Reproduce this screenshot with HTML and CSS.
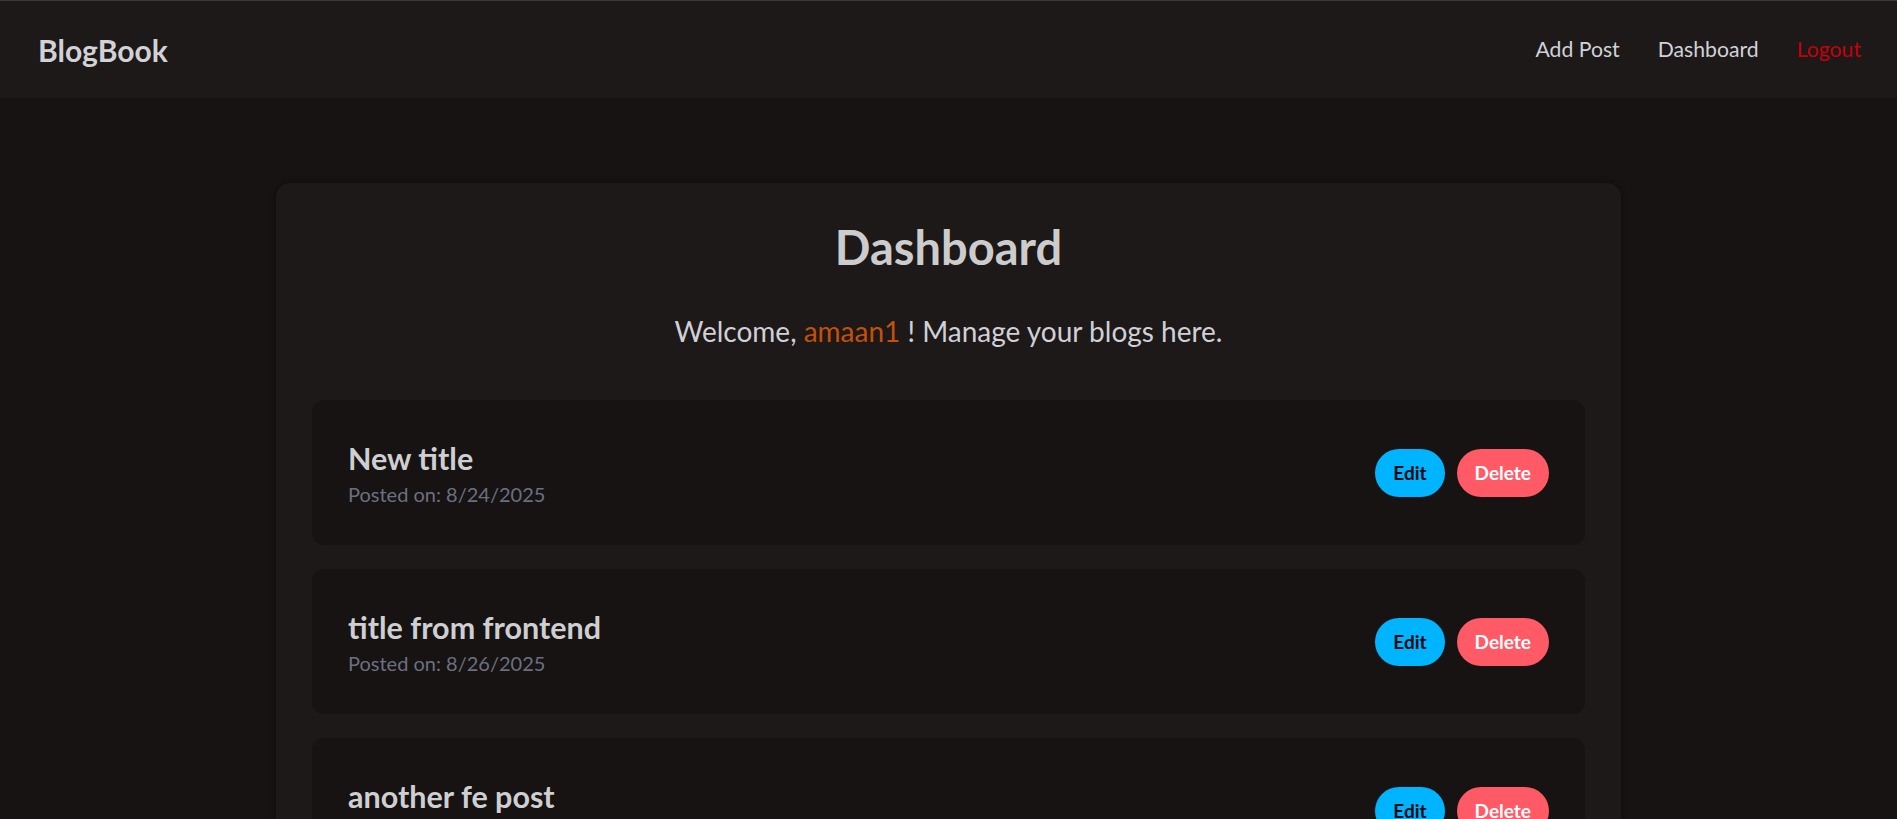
FILE: index.html
```html
<!DOCTYPE html>
<html lang="en">
<head>
<meta charset="utf-8">
<title>BlogBook - Dashboard</title>
<link rel="stylesheet" href="styles.css">
</head>
<body>
<header class="navbar">
  <a class="brand" href="#">BlogBook</a>
  <nav class="nav-links">
    <a class="nav-link" href="#">Add Post</a>
    <a class="nav-link" href="#">Dashboard</a>
    <a class="nav-link logout" href="#">Logout</a>
  </nav>
</header>
<main class="page">
  <section class="panel">
    <h1 class="panel-title">Dashboard</h1>
    <p class="welcome">Welcome, <span class="username">amaan1</span> ! Manage your blogs here.</p>
    <div class="post-list">
      <article class="post-card">
        <div class="post-info">
          <h2 class="post-title">New title</h2>
          <p class="post-date">Posted on: 8/24/2025</p>
        </div>
        <div class="post-actions">
          <button class="btn btn-edit">Edit</button>
          <button class="btn btn-delete">Delete</button>
        </div>
      </article>
      <article class="post-card">
        <div class="post-info">
          <h2 class="post-title">title from frontend</h2>
          <p class="post-date">Posted on: 8/26/2025</p>
        </div>
        <div class="post-actions">
          <button class="btn btn-edit">Edit</button>
          <button class="btn btn-delete">Delete</button>
        </div>
      </article>
      <article class="post-card">
        <div class="post-info">
          <h2 class="post-title">another fe post</h2>
          <p class="post-date">Posted on: 8/27/2025</p>
        </div>
        <div class="post-actions">
          <button class="btn btn-edit">Edit</button>
          <button class="btn btn-delete">Delete</button>
        </div>
      </article>
    </div>
  </section>
</main>
</body>
</html>
```

FILE: styles.css
```css
* {
  box-sizing: border-box;
}

html, body {
  margin: 0;
  padding: 0;
}

body {
  background: #161312;
  color: #cfcfd2;
  font-family: Lato, "Open Sans", "Noto Sans", sans-serif;
  min-height: 100vh;
}

a {
  text-decoration: none;
}

.navbar {
  height: 98px;
  border-top: 1px solid #3a3a3a;
  background: #1c1918;
  display: flex;
  align-items: center;
  justify-content: space-between;
  padding: 0 36px 0 38px;
}

.brand {
  font-size: 30px;
  font-weight: 700;
  color: #d2d2d6;
  line-height: 1.2;
}

.nav-links {
  display: flex;
  align-items: center;
  gap: 38px;
}

.nav-link {
  font-size: 21.2px;
  color: #d0d2d8;
  line-height: 1.2;
}

.nav-link.logout {
  color: #c4000c;
}

.page {
  padding-top: 85px;
}

.panel {
  width: 1345px;
  margin: 0 auto;
  background: #1c1918;
  border-radius: 14px;
  padding: 36px 36px 36px;
  box-shadow: 0 0 6px rgba(0, 0, 0, 0.35);
}

.panel-title {
  margin: 0;
  text-align: center;
  font-size: 47px;
  font-weight: 700;
  line-height: 1.2;
  color: #cccccc;
}

.welcome {
  margin: 35px 0 48px;
  text-align: center;
  font-size: 28px;
  line-height: 1.5;
  color: #d0d0d6;
}

.username {
  color: #c4500c;
}

.post-list {
  display: flex;
  flex-direction: column;
  gap: 24px;
}

.post-card {
  background: #161312;
  border-radius: 12px;
  height: 145px;
  padding: 0 36px;
  display: flex;
  align-items: center;
  justify-content: space-between;
}

.post-info {
  display: flex;
  flex-direction: column;
  gap: 4px;
  padding-top: 2px;
}

.post-title {
  margin: 0;
  font-size: 30.5px;
  font-weight: 700;
  line-height: 1.2;
  color: #cfcfd2;
}

.post-date {
  margin: 0;
  font-size: 20px;
  line-height: 1.4;
  color: #6b7080;
}

.post-actions {
  display: flex;
  gap: 12px;
}

.btn {
  height: 48px;
  border: none;
  border-radius: 24px;
  padding: 0 18px;
  font-family: inherit;
  font-size: 19px;
  font-weight: 700;
  cursor: pointer;
}

.btn-edit {
  background: #00b4ff;
  color: #0b0b10;
}

.btn-delete {
  background: #ff5a66;
  color: #ffffff;
}
```
